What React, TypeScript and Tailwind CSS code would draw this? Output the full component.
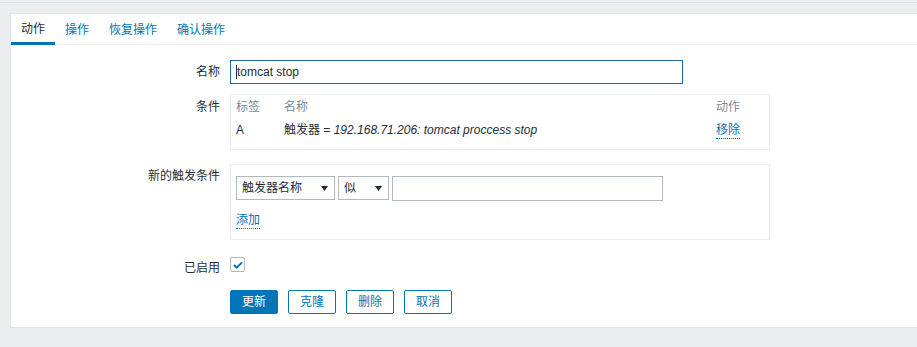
import { useState } from 'react';

const FONT = '"Liberation Sans", "Noto Sans CJK SC", Arial, sans-serif';

const tabs = ['动作', '操作', '恢复操作', '确认操作'];

function SelectBox({ label, width }: { label: string; width: string }) {
  return (
    <div
      className={`${width} h-[24px] border border-[#acbbc2] bg-white flex items-center justify-between pl-[5px] pr-[6px] text-[#1f2c33]`}
    >
      <span className="leading-4">{label}</span>
      <svg width="7" height="5" viewBox="0 0 7 5" className="shrink-0">
        <path d="M0 0 H7 L3.5 5 Z" fill="#1f2c33" />
      </svg>
    </div>
  );
}

function FormRow({
  label,
  labelPad = 'pt-[4px]',
  children,
  className = '',
}: {
  label?: string;
  labelPad?: string;
  children: React.ReactNode;
  className?: string;
}) {
  return (
    <div className={`flex ${className}`}>
      <div className={`w-[219px] pr-[10px] text-right leading-4 text-[#1f2c33] ${labelPad}`}>
        {label}
      </div>
      <div>{children}</div>
    </div>
  );
}

export default function App() {
  const [activeTab] = useState(0);

  return (
    <div
      className="h-[347px] w-full bg-[#ebeef0] overflow-hidden text-[12px]"
      style={{ fontFamily: FONT }}
    >
      <div className="h-[2px]" />
      <div className="h-px bg-[#dde1e4]" />
      <div className="h-[10px]" />

      <section className="ml-[10px] bg-white border-y border-l border-[#dfe4e7] h-[315px]">
        <nav className="flex h-[31px] border-b border-[#ebeef0]">
          {tabs.map((tab, index) => {
            const active = index === activeTab;
            return (
              <div
                key={tab}
                className={
                  active
                    ? 'px-[10px] h-[31px] -mb-px flex items-center pt-[1px] border-b-[3px] border-[#0275b8] text-[#1f2c33]'
                    : 'px-[10px] h-[30px] flex items-center pt-[1px] text-[#0275b8]'
                }
              >
                {tab}
              </div>
            );
          })}
        </nav>

        <div className="pt-[15px]">
          <FormRow label="名称">
            <div className="w-[453px] h-[24px] border border-[#1a6ba0] flex items-center pl-[5px] text-[#1f2c33]">
              <span className="w-px h-[14px] bg-[#1f2c33]" />
              <span className="leading-4">tomcat stop</span>
            </div>
          </FormRow>

          <FormRow label="条件" className="mt-[10px]" labelPad="pt-[5px]">
            <div className="w-[540px] border border-[#ebeef0] px-[5px] pt-[3px] pb-[10px]">
              <div className="flex py-[1px] leading-4 text-[#768d99]">
                <div className="w-[48px]">标签</div>
                <div className="w-[432px]">名称</div>
                <div>动作</div>
              </div>
              <div className="flex mt-[6px] leading-4 text-[#1f2c33]">
                <div className="w-[48px]">A</div>
                <div className="w-[432px]">
                  触发器 = <i>192.168.71.206: tomcat proccess stop</i>
                </div>
                <div>
                  <span className="inline-block border-b border-dotted border-[#0275b8] text-[#0275b8] leading-[15px]">
                    移除
                  </span>
                </div>
              </div>
            </div>
          </FormRow>

          <FormRow label="新的触发条件" className="mt-[14px]" labelPad="pt-[4px]">
            <div className="w-[540px] border border-[#ebeef0] px-[5px] pt-[11px] pb-[10px]">
              <div className="flex gap-[3px]">
                <SelectBox label="触发器名称" width="w-[99px]" />
                <SelectBox label="似" width="w-[51px]" />
                <div className="w-[271px] h-[25px] border border-[#acbbc2] bg-white" />
              </div>
              <div className="mt-[10px]">
                <span className="inline-block border-b border-dotted border-[#0275b8] text-[#0275b8] leading-[16px]">
                  添加
                </span>
              </div>
            </div>
          </FormRow>

          <FormRow label="已启用" className="mt-[17px]" labelPad="pt-[3px]">
            <div className="w-[15px] h-[15px] border border-[#acbbc2] rounded-[2px] bg-white flex items-center justify-center">
              <svg width="10" height="8" viewBox="0 0 10 8">
                <path
                  d="M1 4 L3.8 6.6 L9 1.4"
                  fill="none"
                  stroke="#0275b8"
                  strokeWidth="2"
                />
              </svg>
            </div>
          </FormRow>

          <FormRow className="mt-[14px]">
            <div className="flex gap-[10px]">
              <button className="w-[48px] h-[24px] rounded-[2px] bg-[#0275b8] border border-[#0275b8] text-white leading-4">
                更新
              </button>
              {['克隆', '删除', '取消'].map((label) => (
                <button
                  key={label}
                  className="w-[48px] h-[24px] rounded-[2px] bg-white border border-[#0275b8] text-[#0275b8] leading-4"
                >
                  {label}
                </button>
              ))}
            </div>
          </FormRow>
        </div>
      </section>
    </div>
  );
}
